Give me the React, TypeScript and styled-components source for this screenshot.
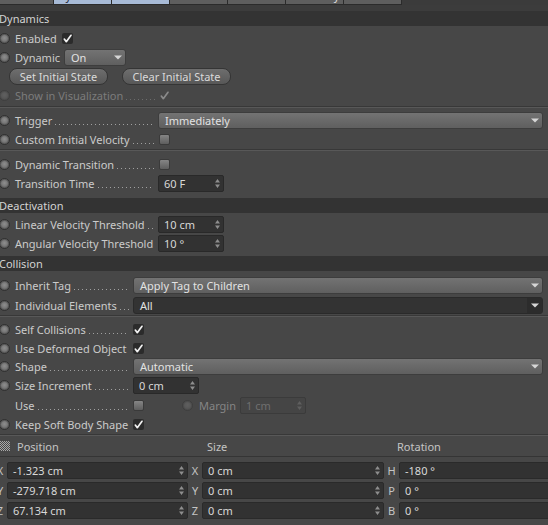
import React from "react";
import styled, { createGlobalStyle, css } from "styled-components";

const Global = createGlobalStyle`
  html, body { margin: 0; padding: 0; background: #474747; }
  body { overflow: hidden; }
`;

const Panel = styled.div`
  width: 548px;
  height: 525px;
  overflow: hidden;
  background: #474747;
  font-family: "Noto Sans", "Open Sans", sans-serif;
  font-size: 11px;
  color: #cbcbcb;
  display: flex;
  flex-direction: column;
`;

const TabBar = styled.div`
  display: flex;
  height: 5px;
  flex: none;
  margin-left: -4px;
  background: #3b3b3b;
`;

const Tab = styled.div<{ $active?: boolean }>`
  flex: 0 0 58px;
  height: 5px;
  overflow: hidden;
  display: flex;
  align-items: flex-end;
  justify-content: center;
  box-sizing: border-box;
  border-right: 1px solid #2b2b2b;
  border-bottom: 1px solid #2b2b2b;
  background: ${(p) => (p.$active ? "#a7bad6" : "#5e5e5e")};
  color: ${(p) => (p.$active ? "#1c2636" : "#e0e0e0")};
`;

const TabText = styled.span`
  flex: none;
  line-height: 17px;
  height: 17px;
  white-space: nowrap;
`;

const Band = styled.div`
  height: 6px;
  flex: none;
  background: #3c3c3c;
`;

const SectionHeader = styled.div`
  height: 15px;
  flex: none;
  background: #333333;
  color: #d2d2d2;
  line-height: 15px;
  margin-left: -1px;
`;

const Group = styled.div<{ $pt?: number; $pb?: number }>`
  display: flex;
  flex-direction: column;
  flex: none;
  padding-top: ${(p) => p.$pt ?? 0}px;
  padding-bottom: ${(p) => p.$pb ?? 0}px;
`;

const Separator = styled.div<{ $mt?: number }>`
  height: 2px;
  flex: none;
  box-sizing: border-box;
  margin-top: ${(p) => p.$mt ?? 0}px;
  border-top: 1px solid #383838;
  border-bottom: 1px solid #585858;
`;

const Row = styled.div<{ $h?: number; $pl?: number; $gap?: number }>`
  display: flex;
  align-items: center;
  flex: none;
  height: ${(p) => p.$h ?? 19}px;
  padding-left: ${(p) => p.$pl ?? 0}px;
  padding-right: 5px;
  gap: ${(p) => p.$gap ?? 0}px;
`;

const Radio = styled.span<{ $dim?: boolean; $hidden?: boolean; $ml?: number }>`
  flex: none;
  width: 11px;
  height: 11px;
  box-sizing: border-box;
  border-radius: 50%;
  border: 1px solid #303030;
  background: radial-gradient(circle at 50% 45%, #8e8e8e 0%, #7a7a7a 40%, #626262 75%);
  box-shadow: inset 0 0 0 1px #5a5a5a;
  margin: 0 5px 0 ${(p) => p.$ml ?? -1}px;
  ${(p) =>
    p.$dim &&
    css`
      opacity: 0.35;
    `}
  ${(p) =>
    p.$hidden &&
    css`
      visibility: hidden;
    `}
`;

const Label = styled.span<{ $dim?: boolean }>`
  white-space: nowrap;
  color: ${(p) => (p.$dim ? "#7c7c7c" : "#cbcbcb")};
`;

const LabelCell = styled.div<{ $w: number }>`
  display: flex;
  align-items: center;
  flex: none;
  width: ${(p) => p.$w}px;
  height: 100%;
`;

const Leader = styled.span<{ $dim?: boolean }>`
  flex: 1;
  height: 1px;
  margin: 8px 4px 0 3px;
  background: repeating-linear-gradient(
    to right,
    ${(p) => (p.$dim ? "#6c6c6c" : "#a0a0a0")} 0 1px,
    transparent 1px 4px
  );
`;

const Box = styled.span<{ $ml?: number }>`
  flex: none;
  display: inline-flex;
  width: 11px;
  height: 11px;
  margin-left: ${(p) => p.$ml ?? 0}px;
`;

const EmptyBox = styled.span`
  flex: none;
  width: 11px;
  height: 11px;
  box-sizing: border-box;
  border-radius: 2px;
  border: 1px solid #3a3a3a;
  background: linear-gradient(#858585, #5e5e5e);
`;

const Check = ({ dim, ml }: { dim?: boolean; ml?: number }) => (
  <Box $ml={ml}>
    <svg width="11" height="11" viewBox="0 0 11 11">
      {!dim && <rect x="0" y="0" width="11" height="11" rx="2" fill="#2b2b2b" />}
      <path
        d="M2.3 6.1 L4.3 8.7 L9 2.3"
        stroke={dim ? "#8a8a8a" : "#f2f2f2"}
        strokeWidth="1.7"
        fill="none"
        strokeLinecap="round"
        strokeLinejoin="round"
      />
    </svg>
  </Box>
);

const SelectBox = styled.div<{ $dark?: boolean; $w?: number; $ml?: number }>`
  display: flex;
  align-items: stretch;
  justify-content: space-between;
  box-sizing: border-box;
  height: 17px;
  margin-left: ${(p) => p.$ml ?? 0}px;
  ${(p) =>
    p.$w
      ? css`
          width: ${p.$w}px;
          flex: none;
        `
      : css`
          flex: 1;
        `}
  border-radius: 3px;
  overflow: hidden;
  color: #e2e2e2;
  ${(p) =>
    p.$dark
      ? css`
          background: #333333;
          border: 1px solid #2a2a2a;
        `
      : css`
          background: linear-gradient(#737373, #5f5f5f);
          border: 1px solid #3d3d3d;
        `}
`;

const SelectText = styled.span`
  padding-left: 6px;
  line-height: 15px;
  white-space: nowrap;
`;

const ArrowArea = styled.span<{ $dark?: boolean }>`
  display: flex;
  align-items: center;
  justify-content: center;
  width: 15px;
  background: ${(p) => (p.$dark ? "#2c2c2c" : "transparent")};
`;

const Arrow = () => (
  <svg width="8" height="5" viewBox="0 0 8 5">
    <path d="M0 0.5 H8 L4 4.5 Z" fill="#d6d6d6" />
  </svg>
);

const Select = ({ value, dark, w, ml }: { value: string; dark?: boolean; w?: number; ml?: number }) => (
  <SelectBox $dark={dark} $w={w} $ml={ml}>
    <SelectText>{value}</SelectText>
    <ArrowArea $dark={dark}>
      <Arrow />
    </ArrowArea>
  </SelectBox>
);

const FieldBox = styled.div<{ $w?: number; $disabled?: boolean }>`
  display: flex;
  align-items: center;
  justify-content: space-between;
  box-sizing: border-box;
  height: 17px;
  width: ${(p) => (p.$w ? `${p.$w}px` : "auto")};
  flex: none;
  border-radius: 2px;
  padding: 0 3px 0 5px;
  white-space: nowrap;
  ${(p) =>
    p.$disabled
      ? css`
          background: #454545;
          border: 1px solid #3b3b3b;
          color: #6f6f6f;
        `
      : css`
          background: #323232;
          border: 1px solid #292929;
          color: #d8d8d8;
        `}
`;

const Spinner = ({ dim }: { dim?: boolean }) => (
  <svg width="5" height="9" viewBox="0 0 5 9">
    <path d="M2.5 0 L5 3.5 H0 Z M2.5 9 L5 5.5 H0 Z" fill={dim ? "#5f5f5f" : "#8e8e8e"} />
  </svg>
);

const Field = ({ value, w, disabled }: { value: string; w?: number; disabled?: boolean }) => (
  <FieldBox $w={w} $disabled={disabled}>
    <span>{value}</span>
    <Spinner dim={disabled} />
  </FieldBox>
);

const PillButton = styled.div<{ $w: number }>`
  flex: none;
  width: ${(p) => p.$w}px;
  height: 17px;
  box-sizing: border-box;
  border-radius: 8px;
  border: 1px solid #353535;
  background: linear-gradient(#6e6e6e, #575757);
  color: #dadada;
  text-align: center;
  line-height: 15px;
`;

const MarginGroup = styled.div`
  display: flex;
  align-items: center;
  margin-left: 38px;
`;

const MarginLabel = styled.span`
  color: #858585;
  margin: 0 4px 0 1px;
`;

/* coordinates */

const CoordHeader = styled.div`
  display: flex;
  align-items: center;
  flex: none;
  height: 20px;
  border-bottom: 1px solid #353535;
  color: #c4c4c4;
`;

const HeadCell = styled.div<{ $w: number; $pl: number }>`
  display: flex;
  align-items: center;
  gap: 7px;
  flex: none;
  width: ${(p) => p.$w}px;
  padding-left: ${(p) => p.$pl}px;
  box-sizing: border-box;
`;

const CoordGrid = styled.div`
  display: grid;
  grid-template-columns: 14px 181px 14px 182px 15px 170px;
  grid-auto-rows: 17px;
  row-gap: 3px;
  align-items: center;
  margin-left: -7px;
  padding-top: 5px;
  flex: none;
`;

const Axis = styled.span`
  text-align: center;
  color: #c4c4c4;
`;

const CoordField = styled.div`
  display: flex;
  align-items: center;
  justify-content: space-between;
  height: 17px;
  box-sizing: border-box;
  background: #323232;
  border: 1px solid #2a2a2a;
  border-radius: 2px;
  padding: 0 3px 0 5px;
  color: #d8d8d8;
  white-space: nowrap;
`;

const GridIcon = () => {
  const dots: React.ReactNode[] = [];
  for (let y = 0; y < 10; y++) {
    for (let x = 0; x < 10; x++) {
      if ((x + y) % 2 === 0) dots.push(<rect key={`${x}-${y}`} x={x} y={y} width="1" height="1" />);
    }
  }
  return (
    <svg width="10" height="10" viewBox="0 0 10 10" fill="#a8a8a8">
      {dots}
    </svg>
  );
};

const coords = [
  ["X", "-1.323 cm", "X", "0 cm", "H", "-180 °"],
  ["Y", "-279.718 cm", "Y", "0 cm", "P", "0 °"],
  ["Z", "67.134 cm", "Z", "0 cm", "B", "0 °"],
];

const tabs: [string, boolean][] = [
  ["Basic", false],
  ["Dynamics", true],
  ["Collision", true],
  ["Mass", false],
  ["Force", false],
  ["Soft Body", false],
  ["Cache", false],
];

export default function App() {
  return (
    <Panel>
      <Global />
      <TabBar>
        {tabs.map(([t, a]) => (
          <Tab key={t} $active={a}>
            <TabText>{t}</TabText>
          </Tab>
        ))}
      </TabBar>
      <Band />

      <SectionHeader>Dynamics</SectionHeader>
      <Group $pt={3}>
        <Row>
          <Radio />
          <Label>Enabled</Label>
          <Check ml={5} />
        </Row>
        <Row>
          <Radio />
          <Label>Dynamic</Label>
          <Select value="On" w={62} ml={4} />
        </Row>
        <Row $pl={9} $gap={14}>
          <PillButton $w={99}>Set Initial State</PillButton>
          <PillButton $w={109}>Clear Initial State</PillButton>
        </Row>
        <Row>
          <Radio $dim />
          <LabelCell $w={144}>
            <Label $dim>Show in Visualization</Label>
            <Leader $dim />
          </LabelCell>
          <Check dim />
        </Row>
      </Group>
      <Separator $mt={1} />

      <Group $pt={3}>
        <Row>
          <Radio />
          <LabelCell $w={143}>
            <Label>Trigger</Label>
            <Leader />
          </LabelCell>
          <Select value="Immediately" />
        </Row>
        <Row>
          <Radio />
          <LabelCell $w={144}>
            <Label>Custom Initial Velocity</Label>
            <Leader />
          </LabelCell>
          <EmptyBox />
        </Row>
      </Group>
      <Separator />

      <Group $pt={4} $pb={5}>
        <Row>
          <Radio />
          <LabelCell $w={144}>
            <Label>Dynamic Transition</Label>
            <Leader />
          </LabelCell>
          <EmptyBox />
        </Row>
        <Row>
          <Radio />
          <LabelCell $w={143}>
            <Label>Transition Time</Label>
            <Leader />
          </LabelCell>
          <Field value="60 F" w={66} />
        </Row>
      </Group>

      <SectionHeader>Deactivation</SectionHeader>
      <Group $pt={2} $pb={3}>
        <Row>
          <Radio />
          <LabelCell $w={143}>
            <Label>Linear Velocity Threshold</Label>
            <Leader />
          </LabelCell>
          <Field value="10 cm" w={66} />
        </Row>
        <Row>
          <Radio />
          <LabelCell $w={143}>
            <Label>Angular Velocity Threshold</Label>
            <Leader />
          </LabelCell>
          <Field value="10 °" w={66} />
        </Row>
      </Group>

      <SectionHeader>Collision</SectionHeader>
      <Group $pt={4}>
        <Row $h={20}>
          <Radio />
          <LabelCell $w={118}>
            <Label>Inherit Tag</Label>
            <Leader />
          </LabelCell>
          <Select value="Apply Tag to Children" />
        </Row>
        <Row $h={20}>
          <Radio />
          <LabelCell $w={118}>
            <Label>Individual Elements</Label>
            <Leader />
          </LabelCell>
          <Select value="All" dark />
        </Row>
      </Group>
      <Separator />

      <Group $pt={3}>
        <Row>
          <Radio />
          <LabelCell $w={118}>
            <Label>Self Collisions</Label>
            <Leader />
          </LabelCell>
          <Check />
        </Row>
        <Row $h={18}>
          <Radio />
          <LabelCell $w={118}>
            <Label>Use Deformed Object</Label>
            <Leader />
          </LabelCell>
          <Check />
        </Row>
        <Row>
          <Radio />
          <LabelCell $w={118}>
            <Label>Shape</Label>
            <Leader />
          </LabelCell>
          <Select value="Automatic" />
        </Row>
        <Row>
          <Radio />
          <LabelCell $w={118}>
            <Label>Size Increment</Label>
            <Leader />
          </LabelCell>
          <Field value="0 cm" w={66} />
        </Row>
        <Row $h={20}>
          <Radio $hidden />
          <LabelCell $w={118}>
            <Label>Use</Label>
            <Leader />
          </LabelCell>
          <EmptyBox />
          <MarginGroup>
            <Radio $dim $ml={0} />
            <MarginLabel>Margin</MarginLabel>
            <Field value="1 cm" w={66} disabled />
          </MarginGroup>
        </Row>
        <Row>
          <Radio />
          <LabelCell $w={118}>
            <Label>Keep Soft Body Shape</Label>
            <Leader />
          </LabelCell>
          <Check />
        </Row>
      </Group>
      <Separator />

      <CoordHeader>
        <HeadCell $w={195} $pl={0}>
          <GridIcon />
          <span>Position</span>
        </HeadCell>
        <HeadCell $w={190} $pl={12}>
          Size
        </HeadCell>
        <HeadCell $w={160} $pl={12}>
          Rotation
        </HeadCell>
      </CoordHeader>
      <CoordGrid>
        {coords.map((r, i) => (
          <React.Fragment key={i}>
            <Axis>{r[0]}</Axis>
            <CoordField>
              <span>{r[1]}</span>
              <Spinner />
            </CoordField>
            <Axis>{r[2]}</Axis>
            <CoordField>
              <span>{r[3]}</span>
              <Spinner />
            </CoordField>
            <Axis>{r[4]}</Axis>
            <CoordField>
              <span>{r[5]}</span>
              <Spinner />
            </CoordField>
          </React.Fragment>
        ))}
      </CoordGrid>
    </Panel>
  );
}
